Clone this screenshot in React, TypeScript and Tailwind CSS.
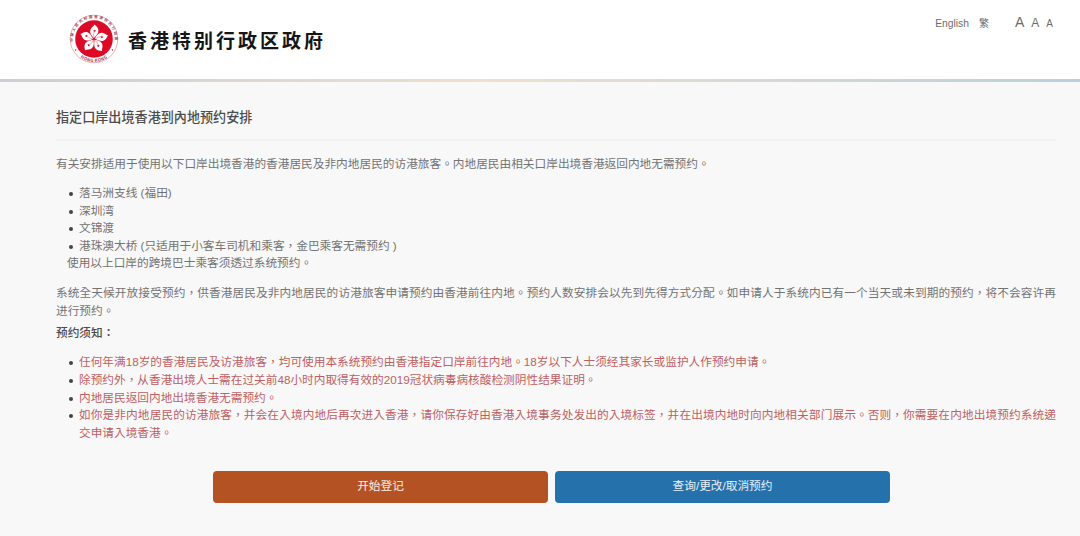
const ports = [
  "落马洲支线 (福田)",
  "深圳湾",
  "文锦渡",
  "港珠澳大桥 (只适用于小客车司机和乘客，金巴乘客无需预约 )",
];

const notices = [
  "任何年满18岁的香港居民及访港旅客，均可使用本系统预约由香港指定口岸前往内地。18岁以下人士须经其家长或监护人作预约申请。",
  "除预约外，从香港出境人士需在过关前48小时内取得有效的2019冠状病毒病核酸检测阴性结果证明。",
  "内地居民返回内地出境香港无需预约。",
  "如你是非内地居民的访港旅客，并会在入境内地后再次进入香港，请你保存好由香港入境事务处发出的入境标签，并在出境内地时向内地相关部门展示。否则，你需要在内地出境预约系统递交申请入境香港。",
];

function Emblem() {
  return (
    <svg viewBox="-25 -25 50 50" className="size-[50px] shrink-0">
      <defs>
        <path id="ring-top" d="M-19 9 A21 21 0 1 1 19 9" />
        <path id="ring-bottom" d="M-18 14.4 A23 23 0 0 0 18 14.4" />
      </defs>
      <circle r="23.8" fill="#fff" stroke="#dc7c88" strokeWidth="0.6" />
      <circle r="18.8" fill="#dc0a26" />
      {/* Bauhinia petals */}
      {[4, 76, 148, 220, 292].map((angle) => (
        <g key={angle} transform={`rotate(${angle})`}>
          <path
            d="M0 -1 C-2.6 -3 -5 -5.6 -4.2 -9 C-3.6 -11.4 -1.6 -12 -0.4 -14.4 C1.2 -13 3.6 -11.8 3.9 -8.6 C4.1 -5.8 1.8 -3.6 0 -1Z"
            fill="#fff"
          />
          <path d="M0 -1.6 Q-1.6 -4.4 -0.2 -7" fill="none" stroke="#e4697a" strokeWidth="0.5" />
          <path d="M0 -9.6 l.4 .9 1 .1 -.7.7 .2 1 -.9-.5 -.9.5 .2-1 -.7-.7 1-.1Z" fill="#dc0a26" />
        </g>
      ))}
      <g fill="#a04555" className="font-['Noto_Sans_CJK_TC',sans-serif] font-bold">
        <text fontSize="3.6">
          <textPath href="#ring-top" startOffset="50%" textAnchor="middle" letterSpacing="1.5">
            中華人民共和國香港特別行政區
          </textPath>
        </text>
        <text fontSize="4.3">
          <textPath href="#ring-bottom" startOffset="50%" textAnchor="middle" letterSpacing="0.3">
            HONG KONG
          </textPath>
        </text>
      </g>
      <circle cx="-18.4" cy="11" r="0.7" fill="#dc0a26" />
      <circle cx="18.4" cy="11" r="0.7" fill="#dc0a26" />
    </svg>
  );
}

function BulletList({ items, className }: { items: string[]; className: string }) {
  return (
    <ul className={`pl-[13px] ${className}`}>
      {items.map((item) => (
        <li key={item} className="flex gap-1.5">
          <span className="mt-2 size-1 shrink-0 rounded-full bg-[#4a4044]" />
          <span className="flex-1 text-justify">{item}</span>
        </li>
      ))}
    </ul>
  );
}

export default function App() {
  return (
    <div className="h-[536px] w-[1080px] overflow-hidden bg-[#f8f8f8] font-['Liberation_Sans','Noto_Sans_CJK_TC',sans-serif] text-[11.68px] leading-[17.6px] text-[#737373]">
      {/* Header */}
      <header className="flex h-[79px] items-start justify-between bg-white pl-[69px] pr-[27px]">
        <div className="flex items-start pt-3.5">
          <Emblem />
          <h1 className="ml-[9px] whitespace-nowrap font-['Noto_Sans_CJK_TC',sans-serif] text-[19px] font-bold leading-[52px] tracking-[3px] text-[#161616]">
            香港特别行政区政府
          </h1>
        </div>
        <nav className="flex items-baseline pt-3.5 text-[10px] text-[#6c6c6c]">
          <a href="#" className="text-[10.3px]">English</a>
          <a href="#" className="ml-2.5">繁</a>
          <a href="#" className="ml-[26px] text-[14px]">A</a>
          <a href="#" className="ml-[7px] text-[12px]">A</a>
          <a href="#" className="ml-[7px] text-[10px]">A</a>
        </nav>
      </header>
      <div className="h-[3px] bg-linear-to-r from-[#cbced3] via-[#eedfcf] via-45% to-[#b9d0da]" />

      {/* Content */}
      <main className="pl-14 pr-6">
        <h2 className="border-b-2 border-[#f2f2f2] pb-[11px] pt-[26px] text-[13.1px] font-medium leading-5 text-[#4c4c4c]">
          指定口岸出境香港到內地预约安排
        </h2>

        <p className="mt-[14px]">
          有关安排适用于使用以下口岸出境香港的香港居民及非内地居民的访港旅客。内地居民由相关口岸出境香港返回内地无需预约。
        </p>

        <BulletList items={ports} className="mt-[11.5px]" />
        <p className="pl-[11px]">使用以上口岸的跨境巴士乘客须透过系统预约。</p>

        <p className="mt-3 text-justify">
          系统全天候开放接受预约，供香港居民及非内地居民的访港旅客申请预约由香港前往内地。预约人数安排会以先到先得方式分配。如申请人于系统内已有一个当天或未到期的预约，将不会容许再进行预约。
        </p>

        <h3 className="mt-[5px] font-medium text-[#4c4c4c]">预约须知：</h3>

        <BulletList items={notices} className="mt-[11.5px] text-[#bd5f63]" />

        {/* Actions */}
        <div className="ml-[157px] mt-[30px] flex gap-[7px] text-white/90">
          <button className="h-8 w-[335px] rounded bg-[#b45224] pb-1">开始登记</button>
          <button className="h-8 w-[335px] rounded bg-[#2471ac] pb-1">查询/更改/取消预约</button>
        </div>
      </main>
    </div>
  );
}
